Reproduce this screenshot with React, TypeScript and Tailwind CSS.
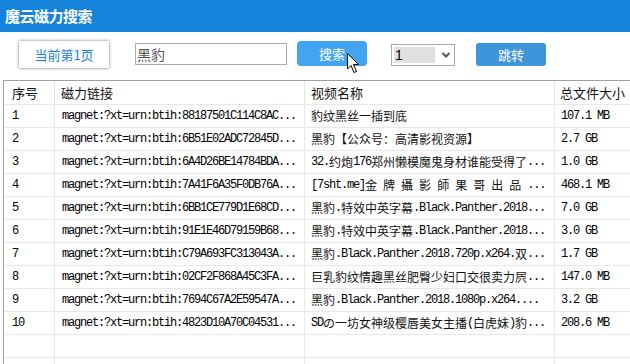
import React from 'react'

const rows = [
  ['1', 'magnet:?xt=urn:btih:88187501C114C8AC...', '豹纹黑丝一插到底', '107.1 MB'],
  ['2', 'magnet:?xt=urn:btih:6B51E02ADC72845D...', '黑豹【公众号：高清影视资源】', '2.7 GB'],
  ['3', 'magnet:?xt=urn:btih:6A4D26BE14784BDA...', '32.约炮176郑州懒模魔鬼身材谁能受得了...', '1.0 GB'],
  ['4', 'magnet:?xt=urn:btih:7A41F6A35F0DB76A...', '[7sht.me]金 牌 攝 影 師 果 哥 出 品 ...', '468.1 MB'],
  ['5', 'magnet:?xt=urn:btih:6BB1CE779D1E68CD...', '黑豹.特效中英字幕.Black.Panther.2018...', '7.0 GB'],
  ['6', 'magnet:?xt=urn:btih:91E1E46D79159B68...', '黑豹.特效中英字幕.Black.Panther.2018...', '3.0 GB'],
  ['7', 'magnet:?xt=urn:btih:C79A693FC313043A...', '黑豹.Black.Panther.2018.720p.x264.双...', '1.7 GB'],
  ['8', 'magnet:?xt=urn:btih:02CF2F868A45C3FA...', '巨乳豹纹情趣黑丝肥臀少妇口交很卖力屄...', '147.0 MB'],
  ['9', 'magnet:?xt=urn:btih:7694C67A2E59547A...', '黑豹.Black.Panther.2018.1080p.x264....', '3.2 GB'],
  ['10', 'magnet:?xt=urn:btih:4823D10A70C04531...', 'SDの一坊女神级樱唇美女主播(白虎妹)豹...', '208.6 MB'],
  ['', '', '', ''],
  ['', '', '', ''],
]

const cell = "h-[23px] border-b border-r border-[#e8e8e8] flex items-center overflow-hidden whitespace-pre text-[#111]"

// ascii runs get a half-width mono look, everything else full-width cjk
const Mixed = ({ text }: { text: string }) => {
  const parts = text.match(/[\x20-\x7e]+|[^\x20-\x7e]+/g) || []
  return (
    <>
      {parts.map((p, i) =>
        /^[\x20-\x7e]+$/.test(p) ? (
          <span key={i} className="font-['Liberation_Mono',monospace] text-[12px] tracking-[-1.2px] text-black">{p}</span>
        ) : (
          <span key={i} className="font-['Noto_Sans_CJK_SC',sans-serif] text-[12px]">{p}</span>
        )
      )}
    </>
  )
}

export default function App() {
  return (
    <div className="w-[630px] h-[364px] bg-white overflow-hidden relative font-['Noto_Sans_CJK_SC',sans-serif]">
      {/* title bar */}
      <div className="h-[32px] bg-[#1683da] flex items-center pl-[5px]">
        <span className="text-white font-bold text-[15px] tracking-[-0.5px]">魔云磁力搜索</span>
      </div>

      {/* controls */}
      <div className="h-[48px] relative">
        <div className="flex items-start">
          <div className="ml-[19px] mt-[9px] w-[90px] h-[27px] bg-white shadow-[0_0_3px_rgba(0,0,0,0.55)] flex items-center justify-center text-[13px] text-[#1a80e0]">
            当前第1页
          </div>
          <div className="ml-[26px] mt-[11px] w-[152px] h-[22px] border border-[#aaa] flex items-center pl-[1px] text-[14px] text-[#555]">
            黑豹
          </div>
          <button className="ml-[10px] mt-[9px] w-[70px] h-[25px] bg-[#43a5f2] rounded-[4px] text-white text-[13px] flex items-center justify-center">
            搜索
          </button>
          <div className="ml-[24px] mt-[12px] w-[64px] h-[22px] border border-[#aaa] flex items-center pl-[2px]">
            <div className="w-[41px] h-[16px] bg-[#e0e0e0] flex items-center pl-[1px] text-[14px] text-black font-['Liberation_Sans',sans-serif]">1</div>
            <svg width="10" height="8" viewBox="0 0 10 8" className="ml-[6px]">
              <path d="M1.5 2 L5 5.5 L8.5 2" stroke="#555" strokeWidth="2" fill="none" />
            </svg>
          </div>
          <button className="ml-[21px] mt-[11px] w-[70px] h-[23px] bg-[#3f95da] rounded-[3px] text-white text-[13px] flex items-center justify-center">
            跳转
          </button>
        </div>
        {/* mouse cursor */}
        <svg width="14" height="22" viewBox="0 0 14 22" className="absolute left-[347px] top-[21px]">
          <path d="M0.5 0.5 L0.5 16 L4 12.5 L7 19.5 L9.5 18.5 L6.5 11.5 L11.5 11.5 Z" fill="#fff" stroke="#000" strokeWidth="1" strokeLinejoin="round" />
        </svg>
      </div>

      {/* table */}
      <div className="ml-[3px] border-l border-t border-[#a0a0a0]">
        <div className="grid grid-cols-[51px_250px_250px_1fr] h-[24px] border-b border-[#e8e8e8] text-[13px] text-[#111]">
          <div className="border-r border-[#dbe5f0] flex items-center pl-[8px]">序号</div>
          <div className="border-r border-[#dbe5f0] flex items-center pl-[6px]">磁力链接</div>
          <div className="border-r border-[#dbe5f0] flex items-center pl-[6px]">视频名称</div>
          <div className="flex items-center pl-[5px]">总文件大小</div>
        </div>
        {rows.map((r, i) => (
          <div key={i} className="grid grid-cols-[51px_250px_250px_1fr]">
            <div className={`${cell} pl-[8px]`}><Mixed text={r[0]} /></div>
            <div className={`${cell} pl-[7px]`}><Mixed text={r[1]} /></div>
            <div className={`${cell} pl-[6px]`}><Mixed text={r[2]} /></div>
            <div className={`${cell} pl-[6px] border-r-0`}><Mixed text={r[3]} /></div>
          </div>
        ))}
      </div>
    </div>
  )
}
